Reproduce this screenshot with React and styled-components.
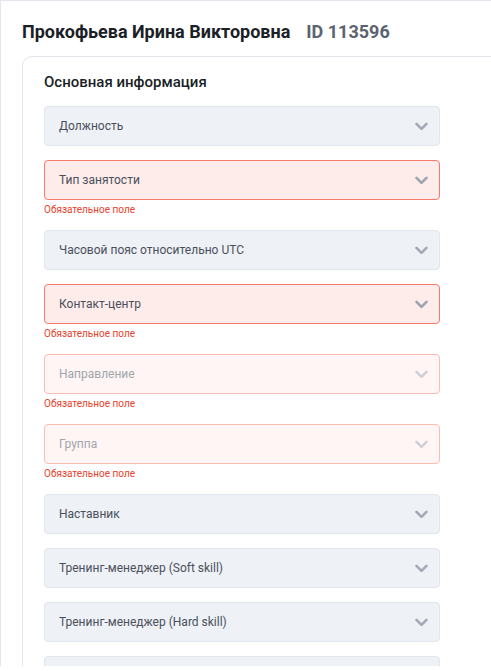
import React from "react";
import styled, { createGlobalStyle } from "styled-components";

const GlobalStyle = createGlobalStyle`
  html, body {
    margin: 0;
    padding: 0;
    background: #fff;
    overflow: hidden;
  }
  body {
    font-family: Roboto, "Liberation Sans", Arial, sans-serif;
  }
`;

const Page = styled.div`
  width: 491px;
  height: 666px;
  box-sizing: border-box;
  border-top: 1px solid #e3e7ed;
  border-left: 1px solid #e3e7ed;
  padding: 19px 0 0 21px;
  overflow: hidden;
`;

const Title = styled.h1`
  margin: 0 0 12px 0;
  font-size: 18px;
  line-height: 24px;
  font-weight: 700;
  color: #1b1f27;
  display: flex;
  gap: 16px;
`;

const UserId = styled.span`
  color: #5c6370;
`;

const Card = styled.div`
  width: 540px;
  min-height: 700px;
  box-sizing: border-box;
  border: 1px solid #e1e5eb;
  border-radius: 10px;
  padding: 15px 21px;
`;

const SectionTitle = styled.h2`
  margin: 0 0 14px 0;
  font-size: 15px;
  line-height: 20px;
  font-weight: 500;
  color: #1b1f27;
`;

const Fields = styled.div`
  display: flex;
  flex-direction: column;
  gap: 14px;
`;

const FieldWrap = styled.div`
  display: flex;
  flex-direction: column;
  width: 396px;
`;

const palette = {
  normal: { bg: "#eef1f6", border: "#e1e5ec", text: "#4a505b", icon: "#a3a9b5" },
  error: { bg: "#fdecea", border: "#f47b6a", text: "#4a505b", icon: "#9ea3ae" },
  disabled: { bg: "#fff5f4", border: "#fbbcb2", text: "#a0a5ae", icon: "#ccd0d8" },
};

const Select = styled.div`
  height: 40px;
  box-sizing: border-box;
  border-radius: 4px;
  border: 1px solid ${(p) => palette[p.$state].border};
  background: ${(p) => palette[p.$state].bg};
  color: ${(p) => palette[p.$state].text};
  display: flex;
  align-items: center;
  justify-content: space-between;
  padding: 0 11px 0 14px;
  font-size: 12px;
`;

const Chevron = styled.svg`
  width: 13px;
  height: 9px;
  color: ${(p) => palette[p.$state].icon};
`;

const ErrorText = styled.div`
  margin-top: 3px;
  font-size: 10px;
  line-height: 13px;
  color: #e8412c;
`;

const fields = [
  { label: "Должность", state: "normal" },
  { label: "Тип занятости", state: "error" },
  { label: "Часовой пояс относительно UTC", state: "normal" },
  { label: "Контакт-центр", state: "error" },
  { label: "Направление", state: "disabled" },
  { label: "Группа", state: "disabled" },
  { label: "Наставник", state: "normal" },
  { label: "Тренинг-менеджер (Soft skill)", state: "normal" },
  { label: "Тренинг-менеджер (Hard skill)", state: "normal" },
  { label: "", state: "normal" },
];

const Field = ({ label, state }) => (
  <FieldWrap>
    <Select $state={state}>
      <span>{label}</span>
      <Chevron $state={state} viewBox="0 0 13 9">
        <path
          d="M1.5 1.8 L6.5 6.8 L11.5 1.8"
          fill="none"
          stroke="currentColor"
          strokeWidth="2.6"
          strokeLinecap="round"
          strokeLinejoin="round"
        />
      </Chevron>
    </Select>
    {state !== "normal" && <ErrorText>Обязательное поле</ErrorText>}
  </FieldWrap>
);

const App = () => (
  <>
    <GlobalStyle />
    <Page>
      <Title>
        Прокофьева Ирина Викторовна <UserId>ID 113596</UserId>
      </Title>
      <Card>
        <SectionTitle>Основная информация</SectionTitle>
        <Fields>
          {fields.map((f, i) => (
            <Field key={i} {...f} />
          ))}
        </Fields>
      </Card>
    </Page>
  </>
);

export default App;
